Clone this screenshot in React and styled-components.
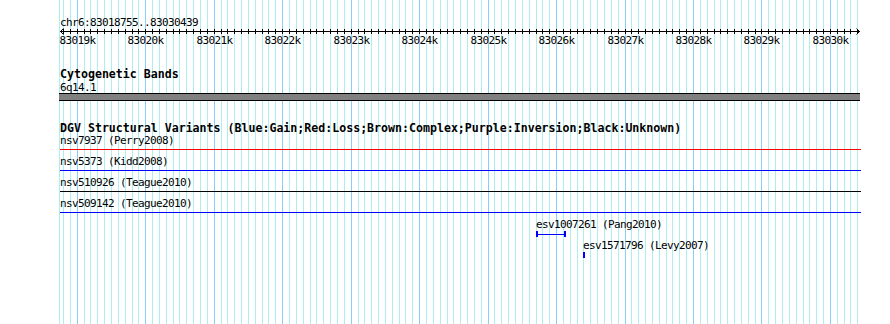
import React from 'react';
import styled, { createGlobalStyle } from 'styled-components';

const START = 83018755;
const END = 83030439;
const TRACK_LEFT = 60;
const TRACK_WIDTH = 800;
const PX_PER_BP = TRACK_WIDTH / (END - START);

const toX = bp => Math.round((bp - START) * PX_PER_BP);

const GlobalStyle = createGlobalStyle`
  body {
    margin: 0;
    background: #ffffff;
  }
`;

const Canvas = styled.div`
  position: relative;
  width: 890px;
  height: 324px;
  overflow: hidden;
  background: #ffffff;
  color: #000;
  font-family: "DejaVu Sans Mono", "Liberation Mono", monospace;
  font-size: 11px;
  letter-spacing: -0.62px;
  line-height: 13px;
`;

const GridLayer = styled.svg`
  position: absolute;
  top: 0;
  left: 0;
  pointer-events: none;
`;

const Tracks = styled.div`
  position: relative;
  margin-left: ${TRACK_LEFT}px;
  width: ${TRACK_WIDTH}px;
`;

const RulerTrack = styled.section`
  padding-top: 16px;
`;

const Caption = styled.div`
  height: 13px;
  white-space: nowrap;
`;

const RulerSvg = styled.svg`
  display: block;
  overflow: visible;
`;

const TickLabels = styled.div`
  position: relative;
  height: 13px;
`;

const TickLabel = styled.span`
  position: absolute;
  top: 0;
  transform: translateX(-50%);
  white-space: nowrap;
`;

const Track = styled.section`
  margin-top: ${p => p.gap || 21}px;
`;

const TrackTitle = styled.div`
  height: ${p => p.h || 13}px;
  font-size: 11.6px;
  letter-spacing: 0;
  font-weight: bold;
  line-height: 13px;
  white-space: nowrap;
`;

const BandLabel = styled.div`
  height: 12px;
`;

const Band = styled.div`
  height: 6px;
  width: 801px;
  margin-left: -1px;
  background: #808080;
  border-top: 1px solid #000;
  border-bottom: 1px solid #000;
`;

const VariantRow = styled.div`
  height: 21px;
`;

const VariantLabel = styled.div`
  height: 13px;
  white-space: nowrap;
`;

const VariantLine = styled.div`
  margin-top: 2px;
  width: 801px;
  height: 1px;
  background: ${p => p.color};
`;

const Feature = styled.div`
  width: max-content;
  margin-top: ${p => p.gap || 0}px;
`;

const Glyph = styled.div`
  display: flex;
  align-items: center;
  height: 6px;
`;

const Cap = styled.div`
  width: 2px;
  height: 6px;
  background: ${p => p.color};
`;

const Span = styled.div`
  height: 1px;
  background: ${p => p.color};
`;

const gridLines = [];
for (let bp = 83018800; bp < END; bp += 100) {
  gridLines.push({ x: TRACK_LEFT + toX(bp), major: bp % 1000 === 0 });
}

const ticks = [];
for (let bp = 83018800; bp < END; bp += 100) ticks.push(toX(bp));

const tickLabels = [];
for (let k = 83019; k <= 83030; k++) tickLabels.push(k);

const variants = [
  { name: 'nsv7937', ref: 'Perry2008', color: '#ff0000' },
  { name: 'nsv5373', ref: 'Kidd2008', color: '#0000ff' },
  { name: 'nsv510926', ref: 'Teague2010', color: '#000000' },
  { name: 'nsv509142', ref: 'Teague2010', color: '#0000ff' },
];

const features = [
  { name: 'esv1007261', ref: 'Pang2010', start: 83025707, end: 83026141, gap: 0 },
  { name: 'esv1571796', ref: 'Levy2007', start: 83026393, end: 83026400, gap: 2 },
];

function Ruler() {
  const w = TRACK_WIDTH;
  return (
    <RulerSvg width={w} height={5} viewBox={`0 0 ${w} 5`}>
      <line x1={0} y1={2.5} x2={w} y2={2.5} stroke="#000" strokeWidth={1} />
      {ticks.map(x => (
        <line key={x} x1={x + 0.5} y1={0} x2={x + 0.5} y2={5} stroke="#000" strokeWidth={1} />
      ))}
      <polyline points="3.5,-0.5 0.5,2.5 3.5,5.5" fill="none" stroke="#000" strokeWidth={1} />
      <polyline points={`${w - 3.5},-0.5 ${w - 0.5},2.5 ${w - 3.5},5.5`} fill="none" stroke="#000" strokeWidth={1} />
    </RulerSvg>
  );
}

function FeatureGlyph({ width }) {
  const color = '#0000ff';
  if (width <= 3) {
    return (
      <Glyph>
        <Cap color={color} />
      </Glyph>
    );
  }
  return (
    <Glyph>
      <Cap color={color} />
      <Span color={color} style={{ width: width - 4 }} />
      <Cap color={color} />
    </Glyph>
  );
}

export default function App() {
  return (
    <>
      <GlobalStyle />
      <Canvas>
        <GridLayer width={890} height={324}>
          <line x1={59.5} y1={0} x2={59.5} y2={324} stroke="#afeeee" />
          {gridLines.map(l => (
            <line
              key={l.x}
              x1={l.x + 0.5}
              y1={0}
              x2={l.x + 0.5}
              y2={324}
              stroke={l.major ? '#87cefa' : '#afeeee'}
            />
          ))}
        </GridLayer>
        <Tracks>
          <RulerTrack>
            <Caption>chr6:83018755..83030439</Caption>
            <Ruler />
            <TickLabels>
              {tickLabels.map(k => (
                <TickLabel key={k} style={{ left: toX(k * 1000) + 0.5 }}>
                  {k}k
                </TickLabel>
              ))}
            </TickLabels>
          </RulerTrack>

          <Track gap={21}>
            <TrackTitle>Cytogenetic Bands</TrackTitle>
            <BandLabel>6q14.1</BandLabel>
            <Band />
          </Track>

          <Track gap={21}>
            <TrackTitle h={12}>
              DGV Structural Variants (Blue:Gain;Red:Loss;Brown:Complex;Purple:Inversion;Black:Unknown)
            </TrackTitle>
            {variants.map(v => (
              <VariantRow key={v.name}>
                <VariantLabel>
                  {v.name} ({v.ref})
                </VariantLabel>
                <VariantLine color={v.color} />
              </VariantRow>
            ))}
            {features.map(f => (
              <Feature key={f.name} gap={f.gap} style={{ marginLeft: toX(f.start) }}>
                <VariantLabel>
                  {f.name} ({f.ref})
                </VariantLabel>
                <FeatureGlyph width={toX(f.end) - toX(f.start)} />
              </Feature>
            ))}
          </Track>
        </Tracks>
      </Canvas>
    </>
  );
}
